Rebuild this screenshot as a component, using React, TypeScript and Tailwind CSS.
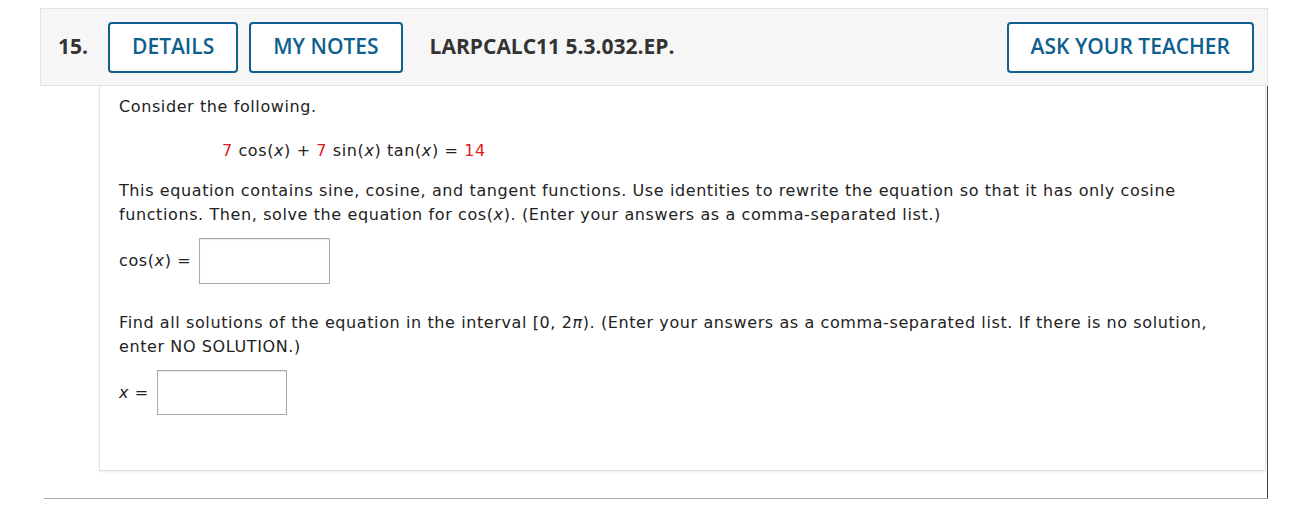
export default function App() {
  const body = { fontFamily: '"DejaVu Sans", Verdana, sans-serif' };
  const head = { fontFamily: '"Open Sans", "Noto Sans", sans-serif' };
  const btn =
    "h-[51px] rounded-[4px] border-2 border-[#0f5f8f] bg-white px-[22px] text-[21px] font-semibold text-[#0f5f8f] flex items-center";
  return (
    <div className="w-[1290px] h-[520px] bg-white pt-[8px]">
      <div className="ml-[40px] w-[1228px]">
        <div
          className="h-[78px] border border-[#e3e3e3] bg-[#f6f6f6] flex items-center pl-[17px] pr-[13px]"
          style={head}
        >
          <span className="text-[21px] font-bold text-[#333]">15.</span>
          <div className="ml-[20px] flex items-center gap-[11px]">
            <button className={btn}>DETAILS</button>
            <button className={btn}>MY NOTES</button>
          </div>
          <span className="ml-[27px] text-[21px] font-bold text-[#333]">LARPCALC11 5.3.032.EP.</span>
          <button className={btn + " ml-auto"}>ASK YOUR TEACHER</button>
        </div>
        <div className="ml-[4px] border-r border-r-[#444] border-b border-b-[#aaa] pl-[55px] pb-[27px]">
          <div
            className="border-l border-r border-b border-[#e2e2e2] mr-[1px] pl-[19px] pr-[20px] pt-[9px] pb-[55px] text-[16px] leading-[24px] tracking-[0.6px] text-[#222] shadow-[0_1px_2px_rgba(0,0,0,0.08)]"
            style={body}
          >
            <p>Consider the following.</p>
            <p className="mt-[20px] ml-[103px]">
              <span className="text-[#e01b1b]">7</span> cos(<i>x</i>) + <span className="text-[#e01b1b]">7</span> sin(<i>x</i>) tan(<i>x</i>) = <span className="text-[#e01b1b]">14</span>
            </p>
            <p className="mt-[16px]">
              This equation contains sine, cosine, and tangent functions. Use identities to rewrite the equation so that it has only cosine functions. Then, solve the equation for cos(<i>x</i>). (Enter your answers as a comma-separated list.)
            </p>
            <div className="mt-[11px] flex items-center">
              <span>cos(<i>x</i>) =</span>
              <div className="ml-[8px] w-[131px] h-[46px] border border-[#aaa] shadow-[inset_0_1px_1px_rgba(0,0,0,0.1)] bg-white"></div>
            </div>
            <p className="mt-[27px]">
              Find all solutions of the equation in the interval [0, 2<i>π</i>). (Enter your answers as a comma-separated list. If there is no solution, enter NO SOLUTION.)
            </p>
            <div className="mt-[11px] flex items-center">
              <span><i>x</i> =</span>
              <div className="ml-[8px] w-[130px] h-[45px] border border-[#aaa] shadow-[inset_0_1px_1px_rgba(0,0,0,0.1)] bg-white"></div>
            </div>
          </div>
        </div>
      </div>
    </div>
  );
}
